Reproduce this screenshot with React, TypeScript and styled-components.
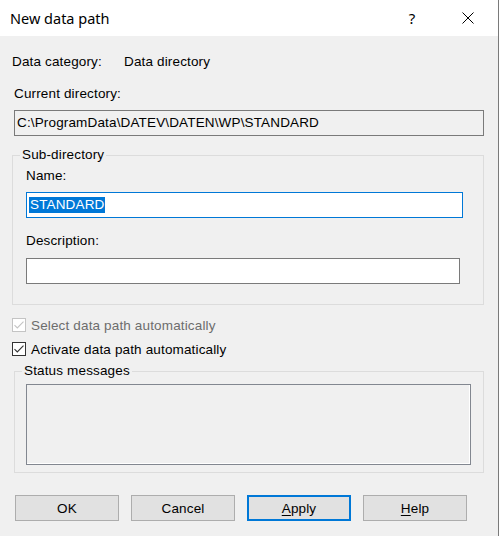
import React from "react";
import styled, { createGlobalStyle } from "styled-components";

const Global = createGlobalStyle`
  html, body { margin: 0; padding: 0; background: #f0f0f0; }
  * { box-sizing: border-box; }
`;

const Window = styled.div`
  width: 499px;
  height: 536px;
  display: flex;
  flex-direction: column;
  background: #f0f0f0;
  font-family: "Liberation Sans", Arial, sans-serif;
  font-size: 13.5px;
  letter-spacing: 0.15px;
  color: #000;
  overflow: hidden;
  border-right: 1px solid #7a7a7a;
`;

const TitleBar = styled.div`
  height: 36px;
  flex: 0 0 36px;
  background: #fff;
  display: flex;
  align-items: center;
  padding-left: 10px;
  padding-right: 2px;
  letter-spacing: 0;
`;

const Title = styled.div`
  flex: 1;
  font-family: "Noto Sans", "Segoe UI", sans-serif;
  font-size: 14.5px;
  color: #000;
  margin-top: -1px;
`;

const CaptionButton = styled.div`
  width: 56px;
  height: 36px;
  display: flex;
  align-items: center;
  justify-content: center;
  font-family: "Noto Sans", "Segoe UI", sans-serif;
  font-size: 15px;
`;

const Body = styled.div`
  flex: 1;
  display: flex;
  flex-direction: column;
  padding: 0 15px 0 12px;
`;

const Line = styled.div<{ $mt: number; $ml?: number }>`
  height: 16px;
  line-height: 16px;
  display: flex;
  margin-top: ${(p) => p.$mt}px;
  margin-left: ${(p) => p.$ml ?? 0}px;
  white-space: nowrap;
`;

const InfoLabel = styled.span`
  width: 112px;
`;

const PathBox = styled.div`
  margin-top: 8px;
  margin-left: 2px;
  width: 470px;
  height: 26px;
  border: 1px solid #7a7a7a;
  background: #f0f0f0;
  padding-left: 2px;
  line-height: 24px;
  white-space: nowrap;
`;

const Group = styled.div<{ $mt: number; $ml: number; $w: number; $h: number }>`
  position: relative;
  margin-top: ${(p) => p.$mt}px;
  margin-left: ${(p) => p.$ml}px;
  width: ${(p) => p.$w}px;
  height: ${(p) => p.$h}px;
  border: 1px solid #dcdcdc;
  display: flex;
  flex-direction: column;
  padding-left: ${(p) => 12 - p.$ml + 1}px;
`;

const Legend = styled.span<{ $x: number }>`
  position: absolute;
  top: -9px;
  left: ${(p) => p.$x}px;
  padding: 0 2px;
  background: #f0f0f0;
  line-height: 16px;
  white-space: nowrap;
`;

const Input = styled.div<{ $w: number; $focus?: boolean; $mt: number }>`
  margin-top: ${(p) => p.$mt}px;
  width: ${(p) => p.$w}px;
  height: 26px;
  background: #fff;
  border: 1px solid ${(p) => (p.$focus ? "#0078d7" : "#7a7a7a")};
  display: flex;
  align-items: center;
  padding-left: 2px;
`;

const Selection = styled.span`
  background: #0078d7;
  color: #fff;
  line-height: 16px;
  height: 16px;
  padding: 0 1px 0 1px;
`;

const CheckRow = styled.div<{ $mt: number; $disabled?: boolean }>`
  margin-top: ${(p) => p.$mt}px;
  height: 16px;
  display: flex;
  align-items: center;
  color: ${(p) => (p.$disabled ? "#6d6d6d" : "#000")};
  white-space: nowrap;
`;

const CheckBox = styled.span<{ $disabled?: boolean }>`
  width: 14px;
  height: 14px;
  border: 1px solid ${(p) => (p.$disabled ? "#c4c4c4" : "#333")};
  background: #fff;
  display: flex;
  align-items: center;
  justify-content: center;
  margin-right: 5px;
  flex: 0 0 14px;
`;

const StatusBox = styled.div`
  margin-top: 12px;
  width: 445px;
  height: 81px;
  border: 1px solid #828790;
  box-shadow: inset -1px -1px 0 #fff;
  background: #f0f0f0;
`;

const ButtonRow = styled.div`
  margin-top: 22px;
  margin-left: 3px;
  display: flex;
  gap: 12px;
`;

const Button = styled.div<{ $default?: boolean }>`
  width: 104px;
  height: 26px;
  background: #e1e1e1;
  border: ${(p) => (p.$default ? "2px solid #0078d7" : "1px solid #adadad")};
  display: flex;
  align-items: center;
  justify-content: center;
  white-space: nowrap;
`;

const U = styled.span`
  text-decoration: underline;
  text-underline-offset: 2px;
`;

const Check = ({ color }: { color: string }) => (
  <svg width="12" height="12" viewBox="0 0 12 12">
    <path d="M1.5 6.2 L4.3 9 L10.5 2.6" fill="none" stroke={color} strokeWidth="1.1" />
  </svg>
);

export default function App() {
  return (
    <Window>
      <Global />
      <TitleBar>
        <Title>New data path</Title>
        <CaptionButton>?</CaptionButton>
        <CaptionButton>
          <svg width="12" height="12" viewBox="0 0 12 12">
            <path d="M0.5 0.5 L11.5 11.5 M11.5 0.5 L0.5 11.5" stroke="#000" strokeWidth="1" fill="none" />
          </svg>
        </CaptionButton>
      </TitleBar>
      <Body>
        <Line $mt={18}>
          <InfoLabel>Data category:</InfoLabel>
          <span>Data directory</span>
        </Line>
        <Line $mt={16} $ml={2}>Current directory:</Line>
        <PathBox>C:\ProgramData\DATEV\DATEN\WP\STANDARD</PathBox>

        <Group $mt={19} $ml={0} $w={472} $h={150}>
          <Legend $x={7}>Sub-directory</Legend>
          <Line $mt={12}>Name:</Line>
          <Input $w={437} $focus $mt={8}>
            <Selection>STANDARD</Selection>
          </Input>
          <Line $mt={15}>Description:</Line>
          <Input $w={434} $mt={9} />
        </Group>

        <CheckRow $mt={12} $disabled>
          <CheckBox $disabled>
            <Check color="#c4c4c4" />
          </CheckBox>
          Select data path automatically
        </CheckRow>
        <CheckRow $mt={8}>
          <CheckBox>
            <Check color="#333" />
          </CheckBox>
          Activate data path automatically
        </CheckRow>

        <Group $mt={14} $ml={2} $w={470} $h={102}>
          <Legend $x={7}>Status messages</Legend>
          <StatusBox />
        </Group>

        <ButtonRow>
          <Button>OK</Button>
          <Button>Cancel</Button>
          <Button $default>
            <U>A</U>pply
          </Button>
          <Button>
            <U>H</U>elp
          </Button>
        </ButtonRow>
      </Body>
    </Window>
  );
}
